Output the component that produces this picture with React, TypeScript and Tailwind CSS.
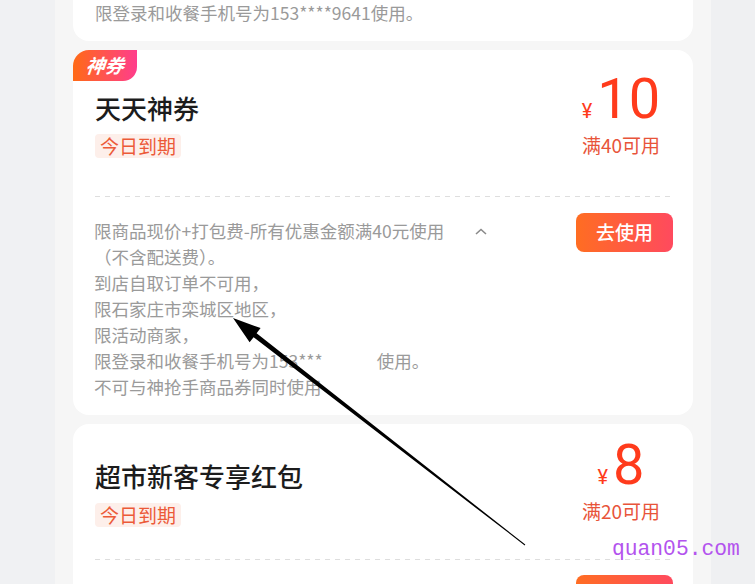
import React from "react";

const CJK = { fontFamily: '"Noto Sans CJK SC", "Noto Sans", sans-serif' };
const ROBOTO = { fontFamily: 'Roboto, "Noto Sans", sans-serif' };

function Dashed() {
  return (
    <div className="mx-[22px] h-px bg-[linear-gradient(to_right,#dedede_50%,transparent_50%)] bg-[length:10px_1px]" />
  );
}

function Price({ amount, min }: { amount: string; min: string }) {
  return (
    <div className="w-[100px] flex flex-col items-center">
      <div className="flex items-baseline text-[#ff3b1c]" style={ROBOTO}>
        <span className="text-[20px] leading-none mr-[5px]">¥</span>
        <span className="text-[56px] leading-[56px]">{amount}</span>
      </div>
      <div className="text-[19px] leading-[24px] text-[#e8543a] mt-[6px]" style={CJK}>
        {min}
      </div>
    </div>
  );
}

function Tag() {
  return (
    <div className="inline-flex h-[24px] items-center rounded-[4px] bg-[#fdefea] px-[5px] text-[19px] text-[#ec5a38]">
      今日到期
    </div>
  );
}

function UseButton() {
  return (
    <div className="flex h-[39px] w-[97px] shrink-0 items-center justify-center rounded-[8px] bg-[linear-gradient(to_right,#ff6d22,#ff4a5e)] text-[19px] font-medium text-white">
      去使用
    </div>
  );
}

export default function App() {
  return (
    <div className="relative h-[584px] w-[755px] overflow-hidden bg-[#f0f1f3]" style={CJK}>
      <div className="flex h-full">
        <div className="w-[55px] shrink-0 bg-[#f0f1f3]" />
        <div className="w-[656px] shrink-0 bg-[#f6f6f6] px-[18px]">
          {/* card 1 (cut off) */}
          <div className="-mt-[30px] rounded-[16px] bg-white px-[22px] pt-[30px] pb-[15px]">
            <div className="text-[17.5px] leading-[26px] text-[#9a9a9a]">
              限登录和收餐手机号为153****9641使用。
            </div>
          </div>

          {/* card 2 */}
          <div className="relative mt-[9px] rounded-[16px] bg-white pb-[15px]">
            <div className="absolute left-0 top-0 flex h-[31px] w-[64px] items-center justify-center rounded-tl-[16px] rounded-br-[14px] bg-[linear-gradient(to_right,#ff6a16,#ff3d8c)]">
              <span className="text-[19px] font-bold italic text-white -skew-x-6">神券</span>
            </div>
            <div className="flex items-start justify-between px-[22px]">
              <div className="pt-[41px]">
                <div className="text-[26px] font-medium leading-[34px] text-[#1c1c1c]">天天神券</div>
                <div className="mt-[9px]">
                  <Tag />
                </div>
              </div>
              <div className="pt-[21px]">
                <Price amount="10" min="满40可用" />
              </div>
            </div>
            <div className="mt-[37px]">
              <Dashed />
            </div>
            <div className="mt-[16px] flex items-start justify-between pl-[21px] pr-[20px]">
              <div className="flex items-start">
                <div className="pt-[5px] text-[17.5px] leading-[26px] text-[#9a9a9a]">
                  <div>限商品现价+打包费-所有优惠金额满40元使用</div>
                  <div>（不含配送费）。</div>
                  <div>到店自取订单不可用，</div>
                  <div>限石家庄市栾城区地区，</div>
                  <div>限活动商家，</div>
                  <div>
                    限登录和收餐手机号为153***
                    <span className="inline-block w-[54px]" />
                    使用。
                  </div>
                  <div>不可与神抢手商品券同时使用</div>
                </div>
                <svg className="ml-[30px] mt-[14px]" width="14" height="9" viewBox="0 0 14 9">
                  <path d="M2 7 L7 2.5 L12 7" fill="none" stroke="#8a8a8a" strokeWidth="1.6" />
                </svg>
              </div>
              <UseButton />
            </div>
          </div>

          {/* card 3 */}
          <div className="relative mt-[9px] rounded-[16px] bg-white pb-[15px]">
            <div className="flex items-start justify-between px-[22px]">
              <div className="pt-[35px]">
                <div className="text-[26px] font-medium leading-[34px] text-[#1c1c1c]">超市新客专享红包</div>
                <div className="mt-[10px]">
                  <Tag />
                </div>
              </div>
              <div className="pt-[13px]">
                <Price amount="8" min="满20可用" />
              </div>
            </div>
            <div className="mt-[31px]">
              <Dashed />
            </div>
            <div className="mt-[15px] flex justify-end pr-[20px]">
              <UseButton />
            </div>
          </div>
        </div>
        <div className="flex-1 bg-[#eff0f2]" />
      </div>

      {/* annotation arrow */}
      <svg className="pointer-events-none absolute left-0 top-0" width="755" height="584" viewBox="0 0 755 584">
        <polygon
          points="233,318 249.6,342.3 253.6,337.2 524.7,545.4 525.3,544.6 256.6,333.2 260.6,328.1"
          fill="#000"
        />
      </svg>

      {/* watermark */}
      <div
        className="pointer-events-none absolute left-[612px] top-[536px] text-[21.3px] leading-[26px] text-[#b353ee]"
        style={{ fontFamily: '"Liberation Mono", "DejaVu Sans Mono", monospace' }}
      >
        quan05.com
      </div>
    </div>
  );
}
